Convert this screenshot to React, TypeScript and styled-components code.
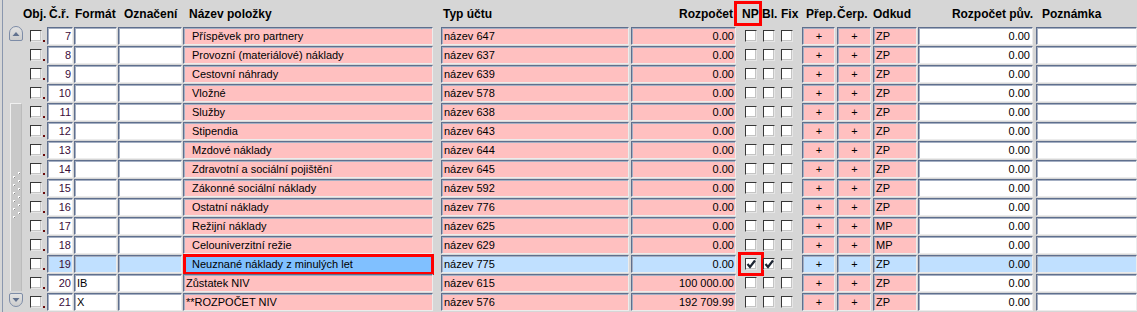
import React from "react";
import styled, { createGlobalStyle } from "styled-components";

const GlobalStyle = createGlobalStyle`
  html, body {
    margin: 0;
    padding: 0;
    background: #d6d6d6;
  }
  body {
    font-family: "Liberation Sans", Arial, sans-serif;
    font-size: 11px;
    color: #000;
  }
`;

const COLS =
  "19px 27px 44px 65px 258px 190px 114px 18px 18px 21px 35px 36px 45px 118px 101px";

type Tone = "white" | "pink" | "sel" | "selDark";

const TONES: Record<Tone, string> = {
  white: "#ffffff",
  pink: "#ffc0c0",
  sel: "#c0e0ff",
  selDark: "#80c0ff",
};

type Item = {
  no: number;
  format?: string;
  name: string;
  indent?: boolean;
  account: string;
  budget: string;
  source: string;
  np?: boolean;
  bl?: boolean;
  selected?: boolean;
};

const items: Item[] = [
  { no: 7, name: "Příspěvek pro partnery", indent: true, account: "název 647", budget: "0.00", source: "ZP" },
  { no: 8, name: "Provozní (materiálové) náklady", indent: true, account: "název 637", budget: "0.00", source: "ZP" },
  { no: 9, name: "Cestovní náhrady", indent: true, account: "název 639", budget: "0.00", source: "ZP" },
  { no: 10, name: "Vložné", indent: true, account: "název 578", budget: "0.00", source: "ZP" },
  { no: 11, name: "Služby", indent: true, account: "název 638", budget: "0.00", source: "ZP" },
  { no: 12, name: "Stipendia", indent: true, account: "název 643", budget: "0.00", source: "ZP" },
  { no: 13, name: "Mzdové náklady", indent: true, account: "název 644", budget: "0.00", source: "ZP" },
  { no: 14, name: "Zdravotní a sociální pojištění", indent: true, account: "název 645", budget: "0.00", source: "ZP" },
  { no: 15, name: "Zákonné sociální náklady", indent: true, account: "název 592", budget: "0.00", source: "ZP" },
  { no: 16, name: "Ostatní náklady", indent: true, account: "název 776", budget: "0.00", source: "ZP" },
  { no: 17, name: "Režijní náklady", indent: true, account: "název 625", budget: "0.00", source: "MP" },
  { no: 18, name: "Celouniverzitní režie", indent: true, account: "název 629", budget: "0.00", source: "MP" },
  { no: 19, name: "Neuznané náklady z minulých let", indent: true, account: "název 775", budget: "0.00", source: "ZP", np: true, bl: true, selected: true },
  { no: 20, format: "IB", name: "Zůstatek NIV", account: "název 615", budget: "100 000.00", source: "ZP" },
  { no: 21, format: "X", name: "**ROZPOČET NIV", account: "název 576", budget: "192 709.99", source: "ZP" },
];

const Frame = styled.div`
  width: 1137px;
  height: 312px;
  overflow: hidden;
  display: flex;
  background: #d6d6d6;
`;

/* left strip with the vertical scrollbar */
const Side = styled.div`
  width: 26px;
  height: 312px;
  margin-left: 2px;
  border-left: 1px solid #8a97ae;
  box-sizing: border-box;
  display: flex;
  flex-direction: column;
  padding: 26px 0 5px 6px;
`;

const ScrollButton = styled.div<{ $down?: boolean }>`
  width: 14px;
  height: ${(p) => (p.$down ? 14 : 15)}px;
  box-sizing: border-box;
  border: 1px solid #7d8ca7;
  border-radius: ${(p) => (p.$down ? "2px 2px 7px 7px" : "7px 7px 2px 2px")};
  background: linear-gradient(#e2e2e2, #cdcdcd);
  display: flex;
  justify-content: center;
  align-items: flex-start;
  padding-top: ${(p) => (p.$down ? 4 : 5)}px;
  flex-shrink: 0;
`;

const Track = styled.div`
  flex: 1;
  display: flex;
  flex-direction: column;
  padding: 62px 0 2px 1px;
`;

const Thumb = styled.div`
  flex: 1;
  width: 12px;
  box-sizing: border-box;
  background: #c9c9c9;
  border-left: 1px solid #f0f0f0;
  border-top: 1px solid #f0f0f0;
  border-right: 1px solid #bcbcbc;
  display: flex;
  justify-content: center;
  padding-top: 68px;
`;

const Table = styled.div`
  display: flex;
  flex-direction: column;
`;

const HeaderRow = styled.div`
  display: grid;
  grid-template-columns: ${COLS};
  height: 27px;
`;

const HeadCell = styled.div<{ $dx?: number; $right?: number }>`
  position: relative;
  font-weight: bold;
  font-size: 12px;
  line-height: 15px;
  padding-top: 7px;
  white-space: nowrap;
  margin-left: ${(p) => p.$dx ?? 0}px;
  text-align: ${(p) => (p.$right !== undefined ? "right" : "left")};
  padding-right: ${(p) => p.$right ?? 0}px;
`;

const Row = styled.div`
  display: grid;
  grid-template-columns: ${COLS};
  height: 19px;
  align-items: start;
`;

const ObjCell = styled.div`
  display: flex;
  align-items: flex-start;
  padding-left: 2px;
  padding-top: 3px;
`;

const Dot = styled.span`
  width: 2px;
  height: 2px;
  margin: 10px 0 0 1px;
  background: #6a0a0a;
`;

const Field = styled.div<{
  $w: number;
  $tone: Tone;
  $align?: "left" | "right" | "center";
  $pad?: number;
  $ink?: string;
}>`
  position: relative;
  width: ${(p) => p.$w}px;
  height: 18px;
  box-sizing: border-box;
  background: ${(p) => TONES[p.$tone]};
  border-style: solid;
  border-width: 1px;
  border-color: #5f6f8d #ececec #ececec #5f6f8d;
  box-shadow: inset 1px 1px 0 #a4afc3;
  line-height: 16px;
  font-size: 11px;
  color: ${(p) => p.$ink ?? "#000"};
  white-space: nowrap;
  overflow: visible;
  text-align: ${(p) => p.$align ?? "left"};
  padding: 0 ${(p) => (p.$align === "right" ? p.$pad ?? 1 : 0)}px 0
    ${(p) => (p.$align === "right" ? 0 : p.$pad ?? 1)}px;
`;

const CheckCell = styled.div`
  position: relative;
  width: 12px;
  height: 12px;
  margin-top: 3px;
`;

const Box = styled.span`
  display: block;
  width: 12px;
  height: 12px;
  box-sizing: border-box;
  background: #fff;
  border-style: solid;
  border-width: 1px;
  border-color: #363636 #e6e6e6 #e6e6e6 #363636;
  box-shadow: inset -1px -1px 0 #c4c4c4;
  position: relative;
`;

const Mark = styled.span<{ $t: number; $l: number; $r: number; $b: number }>`
  position: absolute;
  top: ${(p) => p.$t}px;
  left: ${(p) => p.$l}px;
  right: ${(p) => p.$r}px;
  bottom: ${(p) => p.$b}px;
  border: 3px solid #ff0000;
  pointer-events: none;
`;

const Arrow = ({ down }: { down?: boolean }) => (
  <svg width="8" height="4" viewBox="0 0 8 4">
    <polygon points={down ? "0.5,0 7.5,0 4,4" : "4,0 7.5,4 0.5,4"} fill="#62728f" />
  </svg>
);

const Grip = () => {
  const dots: React.ReactElement[] = [];
  for (let i = 0; i < 6; i++) {
    dots.push(<rect key={"r" + i} x={6} y={i * 8} width={2} height={2} fill="#ffffff" />);
    dots.push(<rect key={"rs" + i} x={7} y={i * 8 + 1} width={1} height={1} fill="#8a8a8a" />);
    dots.push(<rect key={"l" + i} x={1} y={i * 8 + 4} width={2} height={2} fill="#ffffff" />);
    dots.push(<rect key={"ls" + i} x={2} y={i * 8 + 5} width={1} height={1} fill="#8a8a8a" />);
  }
  return (
    <svg width="9" height="50" viewBox="0 0 9 50">
      {dots}
    </svg>
  );
};

const Check = () => (
  <svg
    width="10"
    height="10"
    viewBox="0 0 10 10"
    style={{ position: "absolute", left: 0, top: 0 }}
  >
    <polyline points="1.5,5 4,8 9,1.5" fill="none" stroke="#1e2633" strokeWidth="2.2" />
  </svg>
);

const CheckBox = ({ checked, children }: { checked?: boolean; children?: React.ReactNode }) => (
  <CheckCell>
    <Box>{checked && <Check />}</Box>
    {children}
  </CheckCell>
);

const ItemRow = ({ item }: { item: Item }) => {
  const sel = item.selected;
  const plain: Tone = sel ? "sel" : "white";
  const pink: Tone = sel ? "sel" : "pink";
  return (
    <Row>
      <ObjCell>
        <Box />
        <Dot />
      </ObjCell>
      <Field $w={26} $tone={plain} $align="right" $pad={1} $ink="#3a0c3a">
        {item.no}
      </Field>
      <Field $w={43} $tone={plain} $pad={2}>
        {item.format}
      </Field>
      <Field $w={64} $tone={plain} />
      <Field $w={250} $tone={sel ? "selDark" : "pink"} $pad={item.indent ? 8 : 2}>
        {item.name}
        {sel && <Mark $t={-2} $l={-1} $r={-2} $b={-3} />}
      </Field>
      <Field $w={188} $tone={pink} $pad={2}>
        {item.account}
      </Field>
      <Field $w={105} $tone={pink} $align="right" $pad={1}>
        {item.budget}
      </Field>
      <CheckBox checked={item.np}>
        {sel && <Mark $t={-6} $l={-7} $r={-7} $b={-6} />}
      </CheckBox>
      <CheckBox checked={item.bl} />
      <CheckBox />
      <Field $w={33} $tone={pink} $align="center">
        +
      </Field>
      <Field $w={34} $tone={pink} $align="center">
        +
      </Field>
      <Field $w={44} $tone={pink} $pad={2}>
        {item.source}
      </Field>
      <Field $w={115} $tone={plain} $align="right" $pad={2}>
        0.00
      </Field>
      <Field $w={101} $tone={plain} />
    </Row>
  );
};

export default function App() {
  return (
    <>
      <GlobalStyle />
      <Frame>
        <Side>
          <ScrollButton>
            <Arrow />
          </ScrollButton>
          <Track>
            <Thumb>
              <Grip />
            </Thumb>
          </Track>
          <ScrollButton $down>
            <Arrow down />
          </ScrollButton>
        </Side>
        <Table>
          <HeaderRow>
            <HeadCell $dx={-5}>Obj.</HeadCell>
            <HeadCell $dx={2}>Č.ř.</HeadCell>
            <HeadCell $dx={1}>Formát</HeadCell>
            <HeadCell $dx={6}>Označení</HeadCell>
            <HeadCell $dx={6}>Název položky</HeadCell>
            <HeadCell $dx={2}>Typ účtu</HeadCell>
            <HeadCell $right={12}>Rozpočet</HeadCell>
            <HeadCell $dx={-3}>
              NP
              <Mark $t={1} $l={-8} $r={1} $b={1} />
            </HeadCell>
            <HeadCell $dx={-1}>Bl.</HeadCell>
            <HeadCell>Fix</HeadCell>
            <HeadCell $dx={4}>Přep.</HeadCell>
            <HeadCell>Čerp.</HeadCell>
            <HeadCell>Odkud</HeadCell>
            <HeadCell $right={3}>Rozpočet pův.</HeadCell>
            <HeadCell $dx={6}>Poznámka</HeadCell>
          </HeaderRow>
          {items.map((item) => (
            <ItemRow key={item.no} item={item} />
          ))}
        </Table>
      </Frame>
    </>
  );
}
